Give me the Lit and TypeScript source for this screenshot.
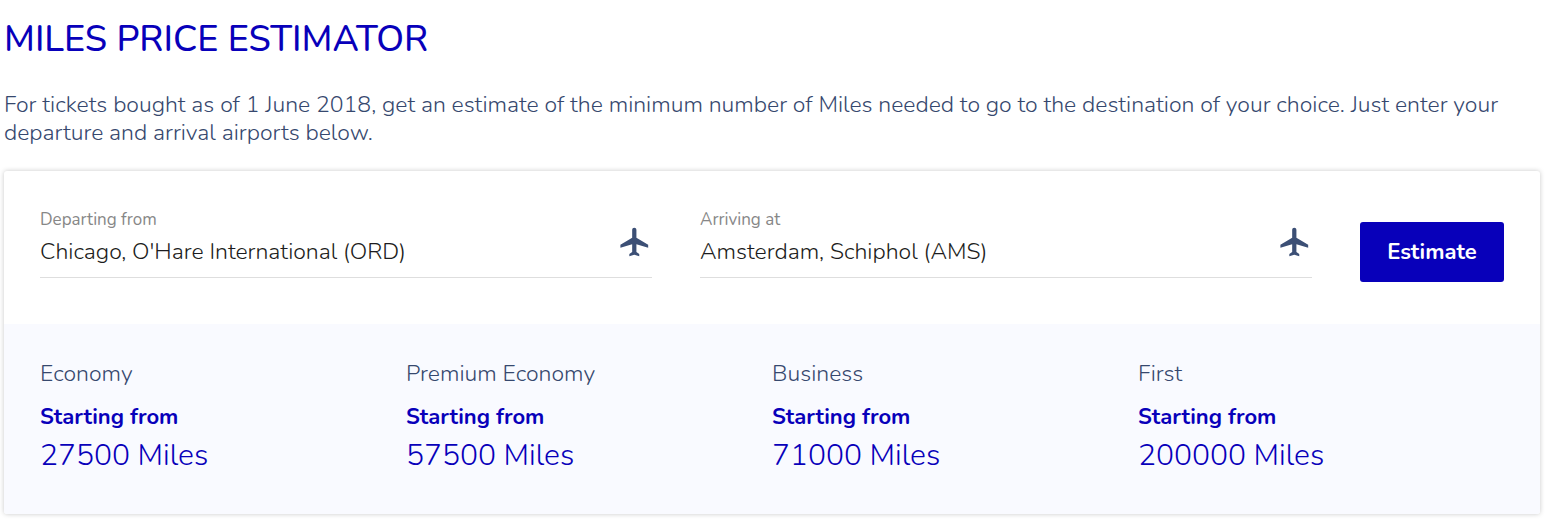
import { LitElement, html, css } from "lit";
import { customElement, property, state } from "lit/decorators.js";

interface Fare {
  cabin: string;
  miles: number;
}

@customElement("airport-field")
class AirportField extends LitElement {
  @property() label = "";
  @property() value = "";

  static styles = css`
    :host {
      display: block;
      min-width: 0;
    }
    .label {
      display: block;
      font-size: 17px;
      line-height: 24px;
      font-weight: 400;
      color: #878787;
    }
    .control {
      display: flex;
      align-items: flex-start;
      height: 45px;
      border-bottom: 1px solid #dedede;
    }
    .input {
      flex: 1;
      min-width: 0;
      height: 38px;
      padding: 0;
      border: 0;
      outline: 0;
      background: transparent;
      font: inherit;
      color: #1c1c20;
    }
    .plane {
      flex: none;
      width: 34px;
      height: 34px;
      margin-top: -7px;
      fill: #3c4f75;
    }
  `;

  render() {
    return html`
      <label class="label" for="airport">${this.label}</label>
      <div class="control">
        <input class="input" id="airport" type="text" autocomplete="off" .value=${this.value} />
        <svg class="plane" viewBox="0 0 24 24" aria-hidden="true">
          <path d="M21.3 16v-2L13 9V3.5c0-.83-.67-1.5-1.5-1.5S10 2.67 10 3.5V9l-8.3 5v2l8.3-2.5V19l-2 1.5V22l3.5-1 3.5 1v-1.5L13 19v-5.5l8.3 2.5z" />
        </svg>
      </div>
    `;
  }
}

@customElement("app-root")
class AppRoot extends LitElement {
  @state() fares: Fare[] = [
    { cabin: "Economy", miles: 27500 },
    { cabin: "Premium Economy", miles: 57500 },
    { cabin: "Business", miles: 71000 },
    { cabin: "First", miles: 200000 },
  ];

  static styles = css`
    :host {
      display: block;
      padding: 14px 16px 8px 4px;
      background: #fff;
      color: #36486e;
      font-family: Nunito, "Open Sans", sans-serif;
      font-size: 23px;
      line-height: 28px;
      font-weight: 300;
    }
    .title {
      margin: 0;
      font-size: 36px;
      line-height: 52px;
      font-weight: 500;
      color: #0800ba;
    }
    .intro {
      margin: 25px 0 24px;
    }
    .card {
      border-radius: 3px;
      overflow: hidden;
      background: #fff;
      box-shadow: 0 0 5px rgba(0, 0, 0, 0.22);
    }
    .search {
      display: grid;
      grid-template-columns: 1fr 1fr 144px;
      gap: 48px;
      padding: 37px 36px 42px;
    }
    .submit {
      height: 60px;
      margin-top: 14px;
      padding: 0;
      border: 0;
      border-radius: 3px;
      background: #0800ba;
      color: #fff;
      font: inherit;
      font-size: 22px;
      font-weight: 700;
      cursor: pointer;
    }
    .fares {
      display: grid;
      grid-template-columns: repeat(4, 1fr);
      margin: 0;
      padding: 36px 36px 33px;
      list-style: none;
      background: #f9faff;
    }
    .cabin {
      margin: 0 0 15px;
      font-size: inherit;
      font-weight: inherit;
    }
    .from,
    .miles {
      margin: 0;
      color: #0800ba;
    }
    .from {
      font-size: 22px;
      font-weight: 700;
    }
    .miles {
      font-size: 30px;
      line-height: 50px;
    }
  `;

  render() {
    return html`
      <h1 class="title">MILES PRICE ESTIMATOR</h1>
      <p class="intro">
        For tickets bought as of 1 June 2018, get an estimate of the minimum number of Miles needed
        to go to the destination of your choice. Just enter your departure and arrival airports
        below.
      </p>
      <div class="card">
        <form class="search" @submit=${(e: Event) => e.preventDefault()}>
          <airport-field label="Departing from" value="Chicago, O'Hare International (ORD)"></airport-field>
          <airport-field label="Arriving at" value="Amsterdam, Schiphol (AMS)"></airport-field>
          <button class="submit" type="submit">Estimate</button>
        </form>
        <ul class="fares">
          ${this.fares.map(
            (fare) => html`
              <li>
                <h2 class="cabin">${fare.cabin}</h2>
                <p class="from">Starting from</p>
                <p class="miles">${fare.miles} Miles</p>
              </li>
            `
          )}
        </ul>
      </div>
    `;
  }
}
